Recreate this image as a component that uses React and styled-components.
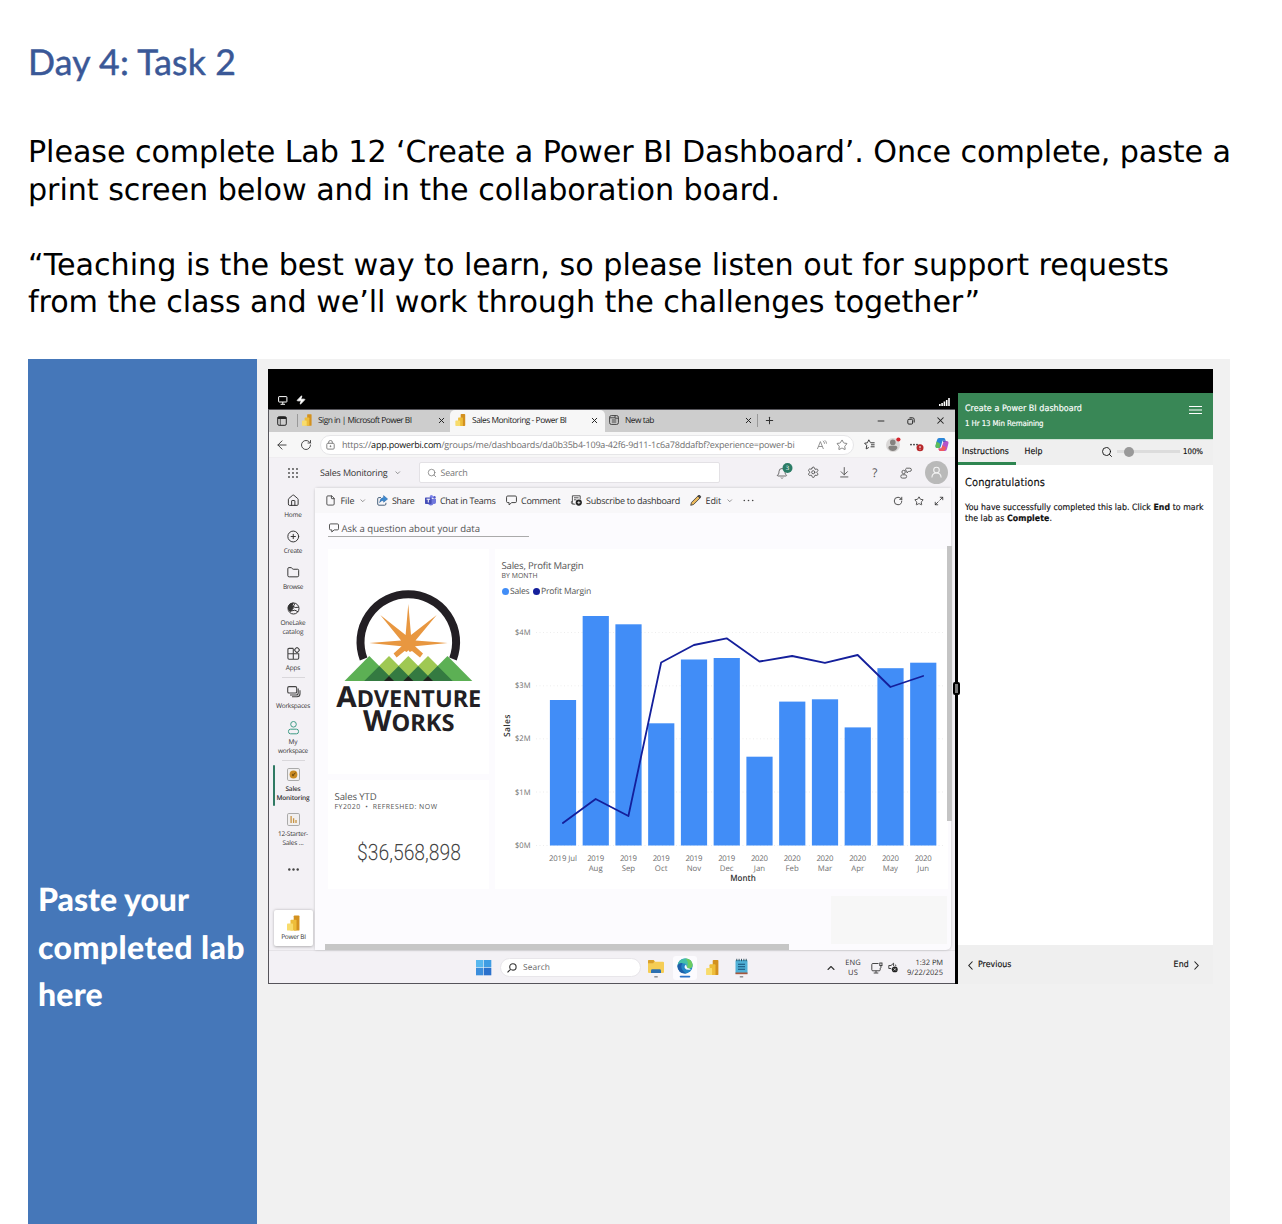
import React, { useLayoutEffect, useRef, useState } from "react";
import styled, { createGlobalStyle, css } from "styled-components";
import {
  Plus, Minus, X, ArrowLeft, RotateCw, Star, ChevronDown, ChevronUp, Search, Settings,
  ArrowDownToLine, Maximize2, House, CirclePlus, Folder, Zap, MessageSquare,
  File as FileIcon, Bell,
} from "lucide-react";

const SEGOE = '"Open Sans", "Noto Sans", sans-serif';
const CALIBRI = 'Lato, "Open Sans", sans-serif';
const VERDANA = '"DejaVu Sans", "Noto Sans", sans-serif';
const TAHOMA = '"DejaVu Sans Condensed", "DejaVu Sans", sans-serif';

const GlobalStyle = createGlobalStyle`
  *, *::before, *::after { box-sizing: border-box; }
  body { margin: 0; background: #fff; overflow: hidden; text-rendering: geometricPrecision; }
  svg { display: block; flex: none; overflow: visible; }
`;

/* ---------- text that fills a set measure ---------- */

const Line = styled.span`
  display: block;
  flex: none;
  width: ${(p) => p.$w}px;
  white-space: nowrap;
  font-family: ${(p) => p.$font || "inherit"};
  font-size: ${(p) => (p.$size ? `${p.$size}px` : "inherit")};
  font-weight: ${(p) => p.$weight || "inherit"};
  > span { display: inline-block; transform-origin: left center; }
`;

function Fit({ w, squeeze, size, weight, font, children }) {
  const ref = useRef(null);
  const [style, setStyle] = useState(null);
  useLayoutEffect(() => {
    const el = ref.current;
    const natural = el.getBoundingClientRect().width;
    const count = el.textContent.length;
    setStyle(
      squeeze
        ? { transform: `scaleX(${w / natural})` }
        : { letterSpacing: `${(w - natural) / Math.max(count, 1)}px` }
    );
  }, [w, squeeze]);
  return (
    <Line $w={w} $size={size} $weight={weight} $font={font}>
      <span ref={ref} style={style}>{children}</span>
    </Line>
  );
}

/* ---------- document ---------- */

const Page = styled.main`
  width: 1282px;
  height: 1224px;
  padding: 40px 52px 0 28px;
  overflow: hidden;
  display: flex;
  flex-direction: column;
`;
const Title = styled.h1`
  margin: 0;
  height: 94px;
  font: 400 35.6px/44px ${CALIBRI};
  color: #3a5897;
  -webkit-text-stroke: 0.5px #3a5897;
`;
const Brief = styled.div`
  height: 225px;
  font: 400 30.2px/37.5px ${VERDANA};
  color: #000;
`;
const BlankLine = styled.div`height: 37.5px;`;
const Table = styled.section`
  flex: 1;
  display: grid;
  grid-template-columns: 229px 1fr;
`;
const PromptCell = styled.div`
  background: #4577b9;
  color: #fff;
  padding: 516px 0 0 10px;
  font: 900 32px/47.5px ${CALIBRI};
`;
const AnswerCell = styled.div`
  background: #f1f1f1;
  padding: 10px 0 0 11px;
`;

/* ---------- lab window ---------- */

const LabWindow = styled.div`
  width: 945px;
  height: 615px;
  display: grid;
  grid-template-columns: 688px 2px 255px;
  background: #000;
  font-family: ${SEGOE};
  color: #333;
`;
const Session = styled.div`
  display: flex;
  flex-direction: column;
`;
const SessionBar = styled.div`
  height: 40px;
  padding: 0 6px 4px 10px;
  display: flex;
  align-items: flex-end;
  gap: 8px;
  color: #fff;
  svg:last-child { margin: 0 0 -1px auto; }
`;
const Desktop = styled.div`
  height: 575px;
  width: 687px;
  border: solid #55545a;
  border-width: 1px 0 1px 1px;
  background: #f3f1f5;
  display: flex;
  flex-direction: column;
`;
const Divider = styled.div`
  position: relative;
  background: #000;
`;
const Grip = styled.div`
  position: absolute;
  left: -3px;
  top: 313px;
  width: 7px;
  height: 13px;
  border: 2px solid #000;
  border-radius: 2px;
  background: #777;
`;

const TabStrip = styled.div`
  height: 22px;
  flex: none;
  display: flex;
  align-items: center;
  padding-bottom: 1px;
  background: #cdcdcd;
  font-size: 8.4px;
`;
const TabMenu = styled.div`
  width: 29px;
  height: 13px;
  padding: 1.5px 0 0 8px;
  border-right: 1px solid #999;
`;
const Tab = styled.div`
  width: ${(p) => p.$width}px;
  height: 22px;
  padding: 0 ${(p) => (p.$active ? 6 : 4)}px 1px ${(p) => (p.$active ? 5 : 4)}px;
  display: flex;
  align-items: center;
  gap: 6px;
  color: #222;
  ${(p) => p.$active && css`
    background: #f7f7f7;
    border-radius: 5px 5px 0 0;
    margin-bottom: -1px;
    padding-bottom: 2px;
  `}
  > svg:last-child { margin-left: auto; }
`;
const NewTab = styled.div`
  height: 13px;
  padding: 1px 0 0 6px;
  border-left: 1px solid #999;
`;
const WindowControls = styled.div`
  margin-left: auto;
  display: grid;
  grid-template-columns: repeat(3, 29.5px);
  justify-items: center;
  align-items: center;
  color: #222;
`;

const AddressBar = styled.div`
  height: 25px;
  flex: none;
  display: flex;
  align-items: center;
  padding: 0 6px 0 6px;
  background: #f7f7f7;
  color: #444;
`;
const BackForward = styled.div`
  width: 45px;
  display: flex;
  align-items: center;
  gap: 11px;
`;
const UrlField = styled.div`
  width: 534px;
  height: 20px;
  padding: 0 5px;
  display: flex;
  align-items: center;
  gap: 7px;
  border: 1px solid #e6e6e8;
  border-radius: 10px;
  background: #fff;
  font-size: 9px;
  color: #707070;
  b { font-weight: 400; color: #111; }
`;
const UrlActions = styled.div`
  margin-left: auto;
  display: flex;
  align-items: center;
  gap: 9px;
  color: #777;
`;
const BrowserActions = styled.div`
  margin-left: 10px;
  display: flex;
  align-items: center;
  gap: 10.7px;
`;

const AppHeader = styled.header`
  height: 30px;
  flex: none;
  display: flex;
  align-items: center;
  padding: 0 3px 0 19px;
  border-top: 1px solid #efedf0;
  font-size: 9px;
`;
const WorkspacePicker = styled.div`
  margin-left: 22px;
  width: 99px;
  display: flex;
  align-items: center;
  gap: 6px;
  color: #333;
`;
const SearchBox = styled.div`
  width: 301px;
  height: 21px;
  padding-left: 7px;
  display: flex;
  align-items: center;
  gap: 3.5px;
  background: #fff;
  border: 1px solid #e3e1e5;
  border-radius: 2px;
  color: #777;
`;
const HeaderActions = styled.div`
  margin-left: auto;
  display: grid;
  grid-template-columns: repeat(6, 30.75px);
  justify-items: center;
  align-items: center;
  color: #555;
`;

const AppBody = styled.div`
  height: 463px;
  flex: none;
  display: grid;
  grid-template-columns: 46px 636px;
`;
const Nav = styled.nav`
  display: flex;
  flex-direction: column;
  align-items: center;
  padding: 6.5px 0 4px 2px;
  font-size: 6.5px;
  line-height: 9px;
  color: #333;
`;
const NavItem = styled.div`
  width: 43px;
  margin-bottom: 11px;
  display: flex;
  flex-direction: column;
  align-items: center;
  position: relative;
  font-weight: ${(p) => (p.$current ? 600 : 400)};
  > svg { margin-bottom: 3px; }
  ${(p) => p.$current && css`
    &::before {
      content: "";
      position: absolute;
      left: 1px;
      top: -3px;
      width: 2px;
      height: 41px;
      border-radius: 1px;
      background: #2f7a63;
    }
  `}
`;
const NavMore = styled(NavItem)`padding-top: 10px;`;
const NavRule = styled.hr`
  width: 23px;
  height: 1px;
  flex: none;
  margin: -6px 0 7px;
  border: 0;
  background: #d9d7db;
`;
const NavHome = styled.div`
  margin-top: auto;
  align-self: flex-start;
  width: 39px;
  height: 36px;
  margin-left: 3px;
  padding-top: 4.5px;
  display: flex;
  flex-direction: column;
  align-items: center;
  gap: 1.5px;
  border-radius: 2px;
  background: #fff;
  box-shadow: 0 0.5px 3px rgba(0, 0, 0, 0.28);
`;

const Content = styled.div`
  display: flex;
  flex-direction: column;
  background: #fcfbfe;
  border-radius: 3px 0 5px 0;
  box-shadow: 0 0 3px rgba(0, 0, 0, 0.2);
  margin-top: 1px;
  position: relative;
`;
const Toolbar = styled.div`
  height: 25px;
  flex: none;
  padding: 0 7px 0 10px;
  display: flex;
  align-items: center;
  gap: 10px;
  background: #f8f7f9;
  font-size: 9px;
`;
const Command = styled.div`
  display: flex;
  align-items: center;
  gap: 4.5px;
`;
const ToolbarEnd = styled.div`
  margin-left: auto;
  display: flex;
  gap: 10.5px;
`;
const Canvas = styled.div`
  padding-left: 13px;
  flex: 1;
`;
const Question = styled.div`
  width: 200.5px;
  height: 24px;
  padding: 7px 0 0 1px;
  display: flex;
  align-items: center;
  gap: 2.5px;
  border-bottom: 1px solid #aaa;
  font-size: 9.6px;
  color: #555;
`;
const Tiles = styled.div`
  margin-top: 12px;
  display: grid;
  grid-template-columns: 161px 453px;
  grid-template-rows: 225px 109px;
  gap: 6px;
`;
const Tile = styled.article`
  background: #fff;
  ${(p) => p.$tall && css`grid-column: 2; grid-row: 1 / span 2;`}
`;
const SummaryTile = styled(Tile)`
  padding: 10px 0 0 6.5px;
  color: #555;
  line-height: 13px;
`;
const Subtitle = styled.div`
  line-height: 9px;
`;
const Figure = styled.div`
  padding: 25.5px 0 0 22px;
  line-height: 30px;
  color: #444;
`;
const ChartHead = styled.div`
  padding: 10px 0 0 6.5px;
  height: 50px;
  color: #555;
  line-height: 13px;
`;
const Legend = styled.div`
  margin-top: 5.5px;
  display: flex;
  align-items: center;
  gap: 1.5px;
  height: 10px;
`;
const Swatch = styled.i`
  width: 7px;
  height: 7px;
  margin-left: ${(p) => p.$gap || 0}px;
  border-radius: 50%;
  background: ${(p) => p.$color};
`;
const EmptyTile = styled.div`
  width: 116px;
  height: 48px;
  margin: 7px 0 0 503px;
  background: #f7f7f7;
`;
const ScrollX = styled.div`
  width: 464px;
  height: 5.5px;
  margin-left: -3px;
  background: #c6c6c6;
`;
const ScrollY = styled.div`
  position: absolute;
  right: -1px;
  top: 58px;
  width: 5px;
  height: 275px;
  background: #c4c4c4;
`;

const Taskbar = styled.footer`
  flex: 1;
  display: flex;
  align-items: center;
  padding: 1px 12px 0 207px;
  border-top: 1px solid #e5e3e7;
  color: #333;
  font-size: 8.4px;
`;
const TaskSearch = styled.div`
  width: 141px;
  height: 19px;
  margin: 0 7px 0 8.5px;
  padding-left: 6px;
  display: flex;
  align-items: center;
  gap: 6px;
  border: 1px solid #e8e6ea;
  border-radius: 10px;
  background: #fff;
  color: #666;
`;
const TaskApps = styled.div`
  display: grid;
  grid-template-columns: 25px 24px 32px 25px;
  justify-items: start;
  align-items: center;
`;
const TaskTile = styled.div`
  width: 24px;
  height: 24px;
  display: grid;
  place-items: center;
  border-radius: 3px;
  background: #fcfbfe;
`;
const AppSlot = styled.div`
  padding-left: ${(p) => p.$inset || 0}px;
`;
const Tray = styled.div`
  margin-left: auto;
  display: flex;
  align-items: center;
`;
const TrayText = styled.div`
  width: ${(p) => p.$width}px;
  margin-left: ${(p) => p.$gap}px;
  display: flex;
  flex-direction: column;
  align-items: ${(p) => p.$align};
  font-size: 7.5px;
  line-height: 10px;
`;
const TrayIcons = styled.div`
  margin-left: 10px;
  display: flex;
  gap: 5px;
`;

/* ---------- instructions panel ---------- */

const Panel = styled.aside`
  margin-top: 24px;
  display: flex;
  flex-direction: column;
  background: #fff;
  color: #111;
  font-family: ${TAHOMA};
  font-size: 8.7px;
  -webkit-text-stroke: 0.15px;
`;
const PanelHead = styled.header`
  height: 46px;
  padding: 9px 11px 0 7px;
  display: flex;
  justify-content: space-between;
  background: #398756;
  color: #fff;
  line-height: 14.5px;
`;
const PanelTabs = styled.div`
  height: 26px;
  display: flex;
  align-items: stretch;
  background: #efefef;
  border-top: 1px solid #cfe3d6;
`;
const PanelTab = styled.div`
  width: ${(p) => p.$width}px;
  padding: 6px 0 0 ${(p) => p.$inset}px;
  border-bottom: 3px solid ${(p) => (p.$on ? "#2e8550" : "transparent")};
  line-height: 13px;
`;
const Zoomer = styled.div`
  margin-left: auto;
  padding: 0 10px 2px 0;
  display: flex;
  align-items: center;
`;
const Track = styled.div`
  width: 63px;
  height: 3px;
  margin: 0 3px 0 4px;
  background: #dcdcdc;
  display: flex;
  align-items: center;
  &::before {
    content: "";
    flex: none;
    width: 10px;
    height: 10px;
    margin-left: 7px;
    border-radius: 50%;
    background: #999;
  }
`;
const PanelBody = styled.div`
  flex: 1;
  padding: 10px 7px;
  line-height: 11px;
`;
const PanelTitle = styled.h2`
  margin: 0 0 13px;
  font: 400 11px/15px ${TAHOMA};
`;
const PanelFoot = styled.footer`
  height: 39px;
  padding: 1px 14px 0 10px;
  display: flex;
  align-items: center;
  justify-content: space-between;
  background: #efefef;
`;
const FootLink = styled.div`
  display: flex;
  align-items: center;
  gap: 5px;
`;

/* ---------- drawings ---------- */

const PowerBi = ({ w = 11, h = 12 }) => (
  <svg width={w} height={h} viewBox="0 0 12 14">
    <rect x="6.2" y="0" width="5.3" height="14" rx="0.8" fill="#d3911f" />
    <path d="M3.2 4.8q0-.8.8-.8H8q.8 0 .8.8V14H3.2z" fill="#eebd3a" />
    <path d="M0 8.3q0-.8.8-.8h4q.8 0 .8.8V14H.8Q0 14 0 13.2z" fill="#f8dc6c" />
  </svg>
);
const Monitor = () => (
  <svg width="10" height="9" viewBox="0 0 10 9" fill="none" stroke="#fff">
    <rect x=".6" y=".6" width="8.3" height="5.4" rx=".5" /><path d="M4.8 6v2M2.6 8.3h4.4" />
  </svg>
);
const Signal = () => (
  <svg width="11" height="8" viewBox="0 0 11 8" fill="#fff">
    <path d="M0 6h1.6v2H0zM2.3 5h1.6v3H2.3zM4.6 3.5h1.6V8H4.6zM6.9 2h1.6v6H6.9zM9.2 0h1.6v8H9.2z" />
  </svg>
);
const TabList = () => (
  <svg width="10" height="10" viewBox="0 0 10 10" fill="none" stroke="#222">
    <rect x=".7" y=".7" width="8.6" height="8.6" rx="1.4" /><path d="M.7 2h8.6" strokeWidth="2" /><path d="M3.3 2v7" strokeWidth=".7" />
  </svg>
);
const PageIcon = () => (
  <svg width="10" height="10" viewBox="0 0 10 10" fill="none" stroke="#333" strokeWidth=".9">
    <rect x=".6" y=".6" width="8.8" height="8.8" rx="1.7" /><path d="M.6 2.8h5.2M6 .8v2.4h3.3M2.8 5h4.5M2.8 7h4.5" />
  </svg>
);
const Restore = () => (
  <svg width="8" height="8" viewBox="0 0 8 8" fill="none" stroke="#222" strokeWidth=".95">
    <rect x=".8" y="2.3" width="4.8" height="4.8" rx="1.1" /><path d="M2.5.8h3Q7.2.8 7.2 2.5v3" />
  </svg>
);
const Lock = () => (
  <svg width="9" height="10" viewBox="0 0 9 10" fill="none" stroke="#777" strokeWidth=".9">
    <rect x=".8" y="3.3" width="7.4" height="5.8" rx="1" /><path d="M2.7 3.3V2a1.8 1.5 0 0 1 3.6 0v1.3" /><circle cx="4.5" cy="6.2" r=".5" fill="#777" />
  </svg>
);
const ReadAloud = () => (
  <svg width="10" height="10" viewBox="0 0 10 10" fill="none" stroke="#888" strokeWidth=".9">
    <path d="M.4 9 3.4 1.6 6.4 9M1.4 6.5h4M6 .8q1.4 1 1.5 3M7.8.3q1.7 1.2 1.7 3.4" />
  </svg>
);
const Favorites = () => (
  <svg width="11" height="11" viewBox="0 0 11 11" fill="none" stroke="#333" strokeWidth=".95" strokeLinejoin="round">
    <path d="M6.4 3.6 4.8.8 3.4 3.8.6 4.2l2.1 2.2-.5 3.5 2.6-1.4M6.6 3.8h4M7 5.8h3.6M6.6 7.8h4" />
  </svg>
);
const BrowserUser = () => (
  <svg width="14" height="14" viewBox="0 0 14 14">
    <circle cx="7" cy="7" r="7" fill="#d9d7d6" /><circle cx="6.8" cy="4.4" r="2.8" fill="#85827f" />
    <path d="M2.3 10q0-2.3 2.2-2.3h4.8q2.1 0 2.1 2.3-1.5 3-4.6 3T2.3 10z" fill="#85827f" />
    <circle cx="12.4" cy="1.5" r="2.1" fill="#d4242c" />
  </svg>
);
const MoreAlert = () => (
  <svg width="14" height="12" viewBox="0 0 14 12">
    <g fill="#333"><circle cx="1" cy="5.6" r=".9" /><circle cx="4" cy="5.6" r=".9" /><circle cx="7" cy="5.6" r=".9" /></g>
    <circle cx="10" cy="8.8" r="3.5" fill="#b8292b" /><path d="M10 7v2.2M10 10v.6" stroke="#fff" />
  </svg>
);
const Copilot = () => (
  <svg width="14" height="13" viewBox="0 0 14 13">
    <path d="M4 0h4.6q1.3 0 1.6 1.2l.4 1.3H7.6L5.7 8.7Q5.3 10 4 10H2.5Q0 10 .6 7.5L2 2Q2.5 0 4 0z" fill="#2a86d8" />
    <path d="M.6 7.2 1.6 3.6 5 5.6 4.6 10H2.5Q0 10 .6 7.2z" fill="#5fbd58" />
    <path d="M10 13H5.4q-1.3 0-1.6-1.2l-.4-1.3h3L8.3 4.3Q8.7 3 10 3h1.5q2.5 0 1.9 2.5L12 11q-.5 2-2 2z" fill="#b554c8" />
    <path d="M5.4 13q-1.3 0-1.6-1.2l-.4-1.3h3l1-3.3 3.8 2.3Q10 13 8.6 13z" fill="#ef5a5f" />
    <path d="M7.6 2.5h3q.2 1.2 1 .6L8.4 4z" fill="#314fc0" />
  </svg>
);
const Waffle = () => (
  <svg width="10" height="10" viewBox="0 0 10 10" fill="#444">
    {[1, 5, 9].map((y) => [1, 5, 9].map((x) => <circle key={`${x}${y}`} cx={x} cy={y} r=".9" />))}
  </svg>
);
const Alerts = () => (
  <svg width="12" height="14" viewBox="0 0 12 14">
    <Bell x="-1" y="1.5" size={12} strokeWidth={1.7} />
    <circle cx="10.5" cy="2" r="5" fill="#2b7c66" />
    <text x="10.5" y="4.2" textAnchor="middle" fontFamily={SEGOE} fontSize="6" fill="#fff">3</text>
  </svg>
);
const People = () => (
  <svg width="12" height="12" viewBox="0 0 12 12" fill="none" stroke="#555" strokeWidth=".9">
    <circle cx="3.6" cy="5" r="1.7" /><rect x=".8" y="7.8" width="5.8" height="3.3" rx="1.5" />
    <path d="M6.6 1.2h3.2q1.6 0 1.6 1.6T9.8 4.4H8.6L7 5.9V4.4q-1.4-.2-1.4-1.6t1-1.6z" />
  </svg>
);
const Account = () => (
  <svg width="23" height="23" viewBox="0 0 23 23" fill="none" stroke="#f3f3f3" strokeWidth="1.1">
    <circle cx="11.5" cy="11.5" r="11.5" fill="#b9b9b9" stroke="none" /><circle cx="11.5" cy="9" r="2.8" />
    <path d="M6.9 16.5q.2-4.5 4.6-4.5t4.6 4.5" />
  </svg>
);
const ShareIcon = () => (
  <svg width="11" height="11" viewBox="0 0 11 11" fill="none">
    <path d="M4 2.6H1.8Q.7 2.6.7 3.8V9q0 1.2 1.2 1.2h5.8Q8.9 10.2 8.9 9V7.8" stroke="#48607a" />
    <path d="M6.6.6 10.6 4 6.6 7.2V5.4Q4 5.3 2.6 7.6 3 3 6.6 2.4z" fill="#3d8ad0" stroke="#255f9f" strokeWidth=".5" />
  </svg>
);
const Teams = () => (
  <svg width="11" height="11" viewBox="0 0 11 11">
    <circle cx="9.4" cy="2.4" r="1.3" fill="#5059c9" /><circle cx="6.4" cy="1.7" r="1.7" fill="#7b83eb" />
    <path d="M7.5 4H11v3.4q-.5 2-2.5 1.6zM4 4h4.8v4Q8 10.8 5.6 10.6T3 8z" fill="#7178dc" />
    <rect x="0" y="2.4" width="6.6" height="6.6" rx=".7" fill="#464eb8" />
    <path d="M1.6 4.2h3.5M3.3 4.2v3.3" stroke="#fff" />
  </svg>
);
const CommentIcon = ({ size = 10 }) => (
  <svg width={size} height={size} viewBox="0 0 10 10" fill="none" stroke="#444" strokeWidth=".9" strokeLinejoin="round">
    <path d="M1.6.9h6.8q1.1 0 1.1 1.1v3.8q0 1.1-1.1 1.1H5.2L2.8 9V6.900H1.600Q.5 6.900.5 5.800V2Q.5.9 1.600.9z" />
  </svg>
);
const Subscribe = () => (
  <svg width="11" height="11" viewBox="0 0 11 11" fill="none" stroke="#444" strokeWidth=".9">
    <path d="M4.400 9.200H3Q1.400 9.200 1.400 7.500V.8h7.800v3.600M1.400 6.600H.4v1q0 1.600 2 1.600M3 2.800h4.600M3 4.800h2.400" />
    <circle cx="7.800" cy="7.600" r="3.100" fill="#222" stroke="none" /><path d="M6.300 7.600h3M7.800 6.100v3" stroke="#fff" strokeWidth=".7" />
  </svg>
);
const Pencil = () => (
  <svg width="11" height="11" viewBox="0 0 11 11" stroke="#333" strokeWidth=".8" strokeLinejoin="round">
    <path d="M.7 10.3 1.5 7.4 7.9 1 10 3.1 3.6 9.5z" fill="#e9b75b" /><path d="M7.9 1Q9-.2 10.2.8T10 3.1z" fill="#555" />
  </svg>
);
const OneLake = () => (
  <svg width="13" height="13" viewBox="0 0 13 13" fill="none" stroke="#333" strokeWidth="1">
    <circle cx="6.5" cy="6.5" r="5.5" /><path d="M1.2 5Q1.8 1.2 6.3.9L5 3.4 6.4 6 3.4 9.6Q1 7.6 1.2 5z" fill="#333" />
    <path d="M5 3.6Q8 6.6 11.8 5.2M4 9q4-2 7.2.8M8 1.4 6.5 4" />
  </svg>
);
const Apps = () => (
  <svg width="13" height="13" viewBox="0 0 13 13" fill="none" stroke="#444" strokeWidth="1.1">
    <path d="M6.3 1.4v10.8M.9 6.8h10.8V11q0 1.2-1.2 1.2H2.1Q.9 12.2.9 11V2.6q0-1.2 1.2-1.2h4.2" /><rect x="8" y="1" width="4" height="4" rx="1" transform="rotate(45 10 3)" />
  </svg>
);
const Workspaces = () => (
  <svg width="13" height="13" viewBox="0 0 13 13" fill="none" stroke="#444" strokeWidth="1.1">
    <rect x=".7" y="1.6" width="9" height="6.4" rx="1.3" /><path d="M3 10h6.2q2 0 2-2V3.6M5 11.7h5q3 0 3-3V5.2" />
  </svg>
);
const Person = () => (
  <svg width="13" height="13" viewBox="0 0 13 13" fill="none" stroke="#3f9c86" strokeWidth="1">
    <circle cx="6.5" cy="3.3" r="2.8" /><rect x="1.5" y="8.2" width="10" height="4.6" rx="2" />
  </svg>
);
const GaugeIcon = () => (
  <svg width="13" height="13" viewBox="0 0 13 13">
    <rect x=".5" y=".5" width="12" height="12" rx="1.3" fill="#f1efef" stroke="#aaa" /><circle cx="6.5" cy="6.5" r="3.9" fill="#c98a22" />
    <path d="M6.2 7 8.6 4.8" stroke="#593d0c" /><circle cx="6" cy="7" r="1.2" fill="#7d5512" />
  </svg>
);
const ReportIcon = () => (
  <svg width="13" height="13" viewBox="0 0 13 13">
    <rect x=".5" y=".5" width="12" height="12" rx="1.3" fill="#f1efef" stroke="#aaa" />
    <path d="M4.1 3v7M6.6 5.2V10M9 7v3" stroke="#c79343" strokeWidth="1.3" />
  </svg>
);
const Dots = ({ r = 1 }) => (
  <svg width="11" height="3" viewBox="0 0 11 3" fill="#444">
    <circle cx="1.3" cy="1.5" r={r} /><circle cx="5.5" cy="1.5" r={r} /><circle cx="9.7" cy="1.5" r={r} />
  </svg>
);
const StartLogo = () => (
  <svg width="15.5" height="15.5" viewBox="0 0 16 16">
    <rect width="7.6" height="7.6" fill="#58b8ee" /><rect x="8.2" width="7.6" height="7.6" fill="#3f9de3" />
    <rect y="8.2" width="7.6" height="7.6" fill="#3b8edc" /><rect x="8.2" y="8.2" width="7.6" height="7.6" fill="#2a71cc" />
  </svg>
);
const TaskMag = () => (
  <svg width="10" height="10" viewBox="0 0 10 10" fill="none" stroke="#333" strokeWidth="1.1">
    <circle cx="5.9" cy="3.9" r="3.2" /><path d="M3.6 6.3.5 9.3" />
  </svg>
);
const Explorer = () => (
  <svg width="16" height="20" viewBox="0 0 16 20">
    <path d="M0 3q0-1 1-1h4.5l1.8 1.7H15q1 0 1 1V14q0 1-1 1H1q-1 0-1-1z" fill="#f5cd55" />
    <path d="M0 3q0-1 1-1h4.5l1 1.2-1.3 2H0z" fill="#d9a02c" />
    <path d="M3 15v-2.3q0-1.4 1.4-1.4h7.2q1.4 0 1.4 1.4V15z" fill="#2c6fb0" /><path d="M6.3 18.8h3.4" stroke="#888" strokeWidth="1.4" />
  </svg>
);
const Edge = () => (
  <svg width="16" height="21" viewBox="0 0 16 21">
    <circle cx="8" cy="9" r="7.6" fill="#2586c6" />
    <path d="M.6 8Q2 1.4 8.4 1.4q6.6.4 7.2 6.2 0 3.8-4 4-2.2-.2-1.6-1.6.6-2-1.6-3.2Q4.6 5 .6 8z" fill="#45bfa8" />
    <path d="M8.6 1.4q6.4.4 7 6.2 0 3.8-4 4-1.8-.1-1.7-1.2Q12.5 6 8.6 1.4z" fill="#6ccb62" />
    <path d="M.4 9Q1.6 5.6 5.6 6.2 3.2 9 5.2 12.6T10 16.3Q1.3 17.6.4 9z" fill="#1d5ea8" />
    <path d="M9 7.600q-2 1.100-1.300 3.300 1.500 2.600 6.300 1.700l-1.700-1q-2.600-.1-2.400-1.500z" fill="#f5fbff" />
    <path d="M3.6 19.6h8.8" stroke="#2a72c8" strokeWidth="1.8" strokeLinecap="round" />
  </svg>
);
const Notepad = () => (
  <svg width="13" height="20" viewBox="0 0 13 20">
    <rect x=".5" y="2" width="12" height="14" rx="1" fill="#4fb0d6" /><rect x=".5" y="14.5" width="12" height="1.7" fill="#a5573c" />
    <path d="M3 6.2h7M3 8.7h7M3 11.2h7" stroke="#164f78" strokeWidth="1.1" />
    <path d="M1.8.8v2.4M4.1.8v2.4M6.5.8v2.4M8.9.8v2.4M11.2.8v2.4" stroke="#245" strokeWidth=".9" /><path d="M4.8 18.8h3.4" stroke="#888" strokeWidth="1.4" />
  </svg>
);
const Network = () => (
  <svg width="12" height="12" viewBox="0 0 12 12" fill="none" stroke="#333" strokeWidth=".9">
    <path d="M7.5 1.5H1.8q-1 0-1 1v5.3q0 1 1 1h6.4q1 0 1-1V6M5 8.8v2M2.7 11h4.6" /><rect x="8.8" y="1" width="2.2" height="2.6" /><path d="M9.9 3.6V6" />
  </svg>
);
const Muted = () => (
  <svg width="10" height="11" viewBox="0 0 10 11" fill="none" stroke="#333" strokeWidth=".9">
    <path d="M5.6 4V1.2L3 3.5H.8v3H3l1 1M7 2.6q1 .6 1 1.500" /><circle cx="6.8" cy="7.4" r="2.9" fill="#222" stroke="none" />
    <path d="m5.7 6.3 2.2 2.2m0-2.2L5.7 8.5" stroke="#fff" strokeWidth=".7" />
  </svg>
);
const Hamburger = () => (
  <svg width="13" height="8" viewBox="0 0 13 8" stroke="#fff" strokeWidth="1">
    <path d="M0 .5h13M0 4h13M0 7.500h13" />
  </svg>
);
const MenuSlot = styled.div`padding-top: 4px;`;
const Caret = ({ d }) => (
  <svg width="5" height="9" viewBox="0 0 5 9" fill="none" stroke="#222" strokeWidth="1.1"><path d={d} /></svg>
);

const ridge = (cx, half, top) => `${cx - half},132 ${cx},${top} ${cx + half},132`;

const AdventureWorks = () => (
  <svg width="161" height="225" viewBox="0 0 161 225">
    <path d="M35.6 109A47.800 47.800 0 1 1 125 109" transform="translate(0 1)" fill="none" stroke="#231f24" strokeWidth="8" />
    <path
      d="M80.3 55 83 86 108.7 66 87.5 91.5 119.7 94 87 97.2 95 104.500 92 108.500 84 102 81.800 103 80.300 101.300 78.800 103 76.600 102 68.600 108.500 65.600 104.500 73.600 97.200 41.300 94 73.100 91.500 52.300 66 77.600 86z"
      fill="#e89740"
    />
    {[61, 80.3, 100].map((x) => <polygon key={x} points={ridge(x, 25, 107)} fill="#9fc853" />)}
    {[41.3, 119.5].map((x) => <polygon key={x} points={ridge(x, 24.8, 107)} fill="#5cb054" />)}
    {[51.2, 70.6, 90.2, 109.7].map((x) => <polygon key={x} points={ridge(x, 15, 117)} fill="#347a41" />)}
    {[61, 80.3, 100].map((x) => <polygon key={x} points={ridge(x, 5, 127)} fill="#20241f" />)}
    <g fontFamily={'"Noto Sans", sans-serif'} fontWeight="700" fill="#231f24">
      <text x="8.3" y="158.3" fontSize="29" textLength="20.5" lengthAdjust="spacingAndGlyphs">A</text>
      <text x="28.8" y="158.3" fontSize="23.4" textLength="124.500" lengthAdjust="spacingAndGlyphs">DVENTURE</text>
      <text x="35" y="182.300" fontSize="29" textLength="28.500" lengthAdjust="spacingAndGlyphs">W</text>
      <text x="63.500" y="182.300" fontSize="23.400" textLength="63" lengthAdjust="spacingAndGlyphs">ORKS</text>
    </g>
  </svg>
);

const AXIS = [["$4M", 632.5], ["$3M", 685.8], ["$2M", 738.8], ["$1M", 792], ["$0M", 845.5]];
const MONTHS = [
  ["2019", "Jul", 700, 823], ["2019", "Aug", 616, 799], ["2019", "Sep", 624.3, 816],
  ["2019", "Oct", 723.3, 662.5], ["2019", "Nov", 659.5, 645], ["2019", "Dec", 658, 638.3],
  ["2020", "Jan", 756.7, 661.5], ["2020", "Feb", 701.6, 656], ["2020", "Mar", 699.3, 662.8],
  ["2020", "Apr", 727.4, 655], ["2020", "May", 668.2, 687], ["2020", "Jun", 662.7, 676],
];
const slot = (i) => 562.9 + i * 32.75;

const SalesChart = () => (
  <svg width="453" height="290" viewBox="495 599 453 290" fontFamily={SEGOE} fontSize="7.8" fill="#6f6f6f">
    {AXIS.map(([label, y]) => (
      <g key={label}>
        <text x="515" y={y + 2.6} textLength="15.5" lengthAdjust="spacingAndGlyphs">{label}</text>
        <path d={`M536 ${y}H945`} stroke="#e8e8e8" strokeWidth=".8" strokeDasharray="1 2.5" />
      </g>
    ))}
    {MONTHS.map(([year, month, top], i) => (
      <g key={i} textAnchor="middle">
        <rect x={slot(i) - 13} y={top} width="26.2" height={845.5 - top} fill="#418df7" />
        {i === 0 ? (
          <text x={slot(i)} y="860.7" textLength="28">{year} {month}</text>
        ) : (
          <>
            <text x={slot(i)} y="860.7" textLength="17">{year}</text>
            <text x={slot(i)} y="871.2">{month}</text>
          </>
        )}
      </g>
    ))}
    <polyline
      points={MONTHS.map(([, , , y], i) => `${slot(i)},${y}`).join(" ")}
      fill="none" stroke="#141f9b" strokeWidth="1.8" strokeLinejoin="round" strokeLinecap="round"
    />
    <g fill="#333" fontWeight="600" fontSize="8.6">
      <text x="743" y="881.2" textAnchor="middle" textLength="25.5" lengthAdjust="spacingAndGlyphs">Month</text>
      <text transform="translate(509.8 737) rotate(-90)" textLength="22.5">Sales</text>
    </g>
  </svg>
);

/* ---------- sections ---------- */

const Close = () => <X size={9} strokeWidth={2.6} />;

const NAV = [
  { icon: <House size={14.5} strokeWidth={1.8} height={13} />, lines: [["Home", 17.5]] },
  { icon: <CirclePlus size={14.5} strokeWidth={1.8} height={13} />, lines: [["Create", 18.5]] },
  { icon: <Folder size={14.5} strokeWidth={1.8} height={13} />, lines: [["Browse", 20]] },
  { icon: <OneLake />, lines: [["OneLake", 25], ["catalog", 21]] },
  { icon: <Apps />, lines: [["Apps", 14.5]], rule: true },
  { icon: <Workspaces />, lines: [["Workspaces", 34]] },
  { icon: <Person />, lines: [["My", 9], ["workspace", 30]], rule: true },
  { icon: <GaugeIcon />, lines: [["Sales", 15], ["Monitoring", 33]], current: true },
  { icon: <ReportIcon />, lines: [["12-Starter-", 30], ["Sales ...", 21]] },
];

const SideNav = () => (
  <Nav>
    {NAV.map((item) => (
      <React.Fragment key={item.lines[0][0]}>
        <NavItem $current={item.current}>
          {item.icon}
          {item.lines.map(([text, w]) => <Fit key={text} w={w}>{text}</Fit>)}
        </NavItem>
        {item.rule && <NavRule />}
      </React.Fragment>
    ))}
    <NavMore><Dots r={1.2} /></NavMore>
    <NavHome><PowerBi w={13} h={16} /><Fit w={24.5}>Power BI</Fit></NavHome>
  </Nav>
);

const Chevron = () => <ChevronDown size={7.5} strokeWidth={2.2} color="#666" />;

const Report = () => (
  <Content>
    <Toolbar>
      <Command><FileIcon size={11} strokeWidth={1.8} /><Fit w={14}>File</Fit><Chevron /></Command>
      <Command><ShareIcon /><Fit w={22.5}>Share</Fit></Command>
      <Command><Teams /><Fit w={55.5}>Chat in Teams</Fit></Command>
      <Command><CommentIcon size={11} /><Fit w={39.5}>Comment</Fit></Command>
      <Command><Subscribe /><Fit w={94}>Subscribe to dashboard</Fit></Command>
      <Command><Pencil /><Fit w={15.5}>Edit</Fit><Chevron /></Command>
      <Dots r={0.8} />
      <ToolbarEnd>
        <RotateCw size={10} strokeWidth={2} /><Star size={10} strokeWidth={2} /><Maximize2 size={10} strokeWidth={2} />
      </ToolbarEnd>
    </Toolbar>
    <Canvas>
      <Question><CommentIcon size={10} /><Fit w={138.5}>Ask a question about your data</Fit></Question>
      <Tiles>
        <Tile><AdventureWorks /></Tile>
        <SummaryTile>
          <Fit w={42} size={9.6}>Sales YTD</Fit>
          <Subtitle><Fit w={103} size={6.9}>FY2020&nbsp; •&nbsp; REFRESHED: NOW</Fit></Subtitle>
          <Figure><Fit w={104} size={22.5} weight={300} squeeze font={'Roboto, "Open Sans", sans-serif'}>$36,568,898</Fit></Figure>
        </SummaryTile>
        <Tile $tall>
          <ChartHead>
            <Fit w={82} size={9.6}>Sales, Profit Margin</Fit>
            <Subtitle><Fit w={36} size={6.9}>BY MONTH</Fit></Subtitle>
            <Legend>
              <Swatch $color="#418df7" /><Fit w={19.5} size={8.6}>Sales</Fit>
              <Swatch $color="#141f9b" $gap={1.5} /><Fit w={50} size={8.6}>Profit Margin</Fit>
            </Legend>
          </ChartHead>
          <SalesChart />
        </Tile>
      </Tiles>
      <EmptyTile />
      <ScrollX />
    </Canvas>
    <ScrollY />
  </Content>
);

const RemoteDesktop = () => (
  <Session>
    <SessionBar><Monitor /><Zap size={10} fill="#fff" /><Signal /></SessionBar>
    <Desktop>
      <TabStrip>
        <TabMenu><TabList /></TabMenu>
        <Tab $width={152}><PowerBi w={10} /><Fit w={93.5}>Sign in | Microsoft Power BI</Fit><Close /></Tab>
        <Tab $width={155} $active><PowerBi /><Fit w={94.5}>Sales Monitoring - Power BI</Fit><Close /></Tab>
        <Tab $width={152}><PageIcon /><Fit w={29}>New tab</Fit><Close /></Tab>
        <NewTab><Plus size={11} strokeWidth={2.2} /></NewTab>
        <WindowControls>
          <Minus size={10} strokeWidth={2.2} /><Restore /><X size={11} strokeWidth={2.2} />
        </WindowControls>
      </TabStrip>
      <AddressBar>
        <BackForward><ArrowLeft size={14} strokeWidth={1.7} /><RotateCw size={12} strokeWidth={1.9} /></BackForward>
        <UrlField>
          <Lock />
          <Fit w={452.5}>https://<b>app.powerbi.com</b>/groups/me/dashboards/da0b35b4-109a-42f6-9d11-1c6a78ddafbf?experience=power-bi</Fit>
          <UrlActions><ReadAloud /><Star size={12} strokeWidth={1.8} /></UrlActions>
        </UrlField>
        <BrowserActions><Favorites /><BrowserUser /><MoreAlert /><Copilot /></BrowserActions>
      </AddressBar>
      <AppHeader>
        <Waffle />
        <WorkspacePicker><Fit w={67.5}>Sales Monitoring</Fit><Chevron /></WorkspacePicker>
        <SearchBox><Search size={10} strokeWidth={1.8} /><Fit w={27}>Search</Fit></SearchBox>
        <HeaderActions>
          <Alerts /><Settings size={12.5} strokeWidth={1.8} /><ArrowDownToLine size={12.5} strokeWidth={1.8} />
          <Fit w={6} size={12}>?</Fit><People /><Account />
        </HeaderActions>
      </AppHeader>
      <AppBody><SideNav /><Report /></AppBody>
      <Taskbar>
        <StartLogo />
        <TaskSearch><TaskMag /><Fit w={27}>Search</Fit></TaskSearch>
        <TaskApps>
          <Explorer />
          <TaskTile><Edge /></TaskTile>
          <AppSlot $inset={9}><PowerBi w={13} h={15} /></AppSlot>
          <AppSlot $inset={6}><Notepad /></AppSlot>
        </TaskApps>
        <Tray>
          <ChevronUp size={12} strokeWidth={2.2} />
          <TrayText $width={16} $gap={8.5} $align="center"><Fit w={15.5}>ENG</Fit><Fit w={10}>US</Fit></TrayText>
          <TrayIcons><Network /><Muted /></TrayIcons>
          <TrayText $width={36} $gap={9} $align="flex-end"><Fit w={27.5}>1:32 PM</Fit><Fit w={36}>9/22/2025</Fit></TrayText>
        </Tray>
      </Taskbar>
    </Desktop>
  </Session>
);

const Instructions = () => (
  <Panel>
    <PanelHead>
      <div>
        <Fit w={117} size={8.9}>Create a Power BI dashboard</Fit>
        <Fit w={78.5} size={7.8}>1 Hr 13 Min Remaining</Fit>
      </div>
      <MenuSlot><Hamburger /></MenuSlot>
    </PanelHead>
    <PanelTabs>
      <PanelTab $width={57.5} $inset={4} $on><Fit w={47}>Instructions</Fit></PanelTab>
      <PanelTab $width={40} $inset={9}><Fit w={18}>Help</Fit></PanelTab>
      <Zoomer><Search size={12} strokeWidth={1.8} /><Track /><Fit w={20} size={7.8}>100%</Fit></Zoomer>
    </PanelTabs>
    <PanelBody>
      <PanelTitle><Fit w={80}>Congratulations</Fit></PanelTitle>
      <Fit w={238.5}>You have successfully completed this lab. Click <b>End</b> to mark</Fit>
      <Fit w={87}>the lab as <b>Complete</b>.</Fit>
    </PanelBody>
    <PanelFoot>
      <FootLink><Caret d="M4.500.5.8 4.500l3.700 4" /><Fit w={33.5}>Previous</Fit></FootLink>
      <FootLink><Fit w={15.5}>End</Fit><Caret d="M.5.5l3.700 4-3.700 4" /></FootLink>
    </PanelFoot>
  </Panel>
);

export default function App() {
  return (
    <>
      <GlobalStyle />
      <Page>
        <Title><Fit w={208}>Day 4: Task 2</Fit></Title>
        <Brief>
          <Fit w={1203}>Please complete Lab 12 ‘Create a Power BI Dashboard’. Once complete, paste a</Fit>
          <Fit w={752}>print screen below and in the collaboration board.</Fit>
          <BlankLine />
          <Fit w={1141}>“Teaching is the best way to learn, so please listen out for support requests</Fit>
          <Fit w={952}>from the class and we’ll work through the challenges together”</Fit>
        </Brief>
        <Table>
          <PromptCell>
            <Fit w={151}>Paste your</Fit>
            <Fit w={207}>completed lab</Fit>
            <Fit w={65}>here</Fit>
          </PromptCell>
          <AnswerCell>
            <LabWindow>
              <RemoteDesktop />
              <Divider><Grip /></Divider>
              <Instructions />
            </LabWindow>
          </AnswerCell>
        </Table>
      </Page>
    </>
  );
}
